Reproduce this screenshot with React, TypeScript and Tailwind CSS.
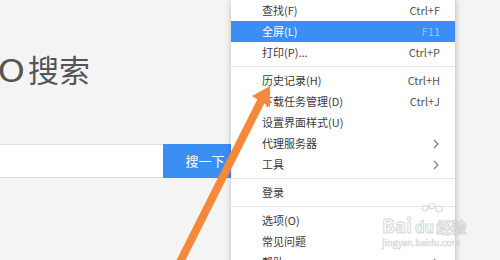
import React from "react";

type Item =
  | { type: "item"; label: string; shortcut?: string; sub?: boolean; active?: boolean }
  | { type: "sep" };

const items: Item[] = [
  { type: "item", label: "查找(F)", shortcut: "Ctrl+F" },
  { type: "item", label: "全屏(L)", shortcut: "F11", active: true },
  { type: "item", label: "打印(P)...", shortcut: "Ctrl+P" },
  { type: "sep" },
  { type: "item", label: "历史记录(H)", shortcut: "Ctrl+H" },
  { type: "item", label: "下载任务管理(D)", shortcut: "Ctrl+J" },
  { type: "item", label: "设置界面样式(U)" },
  { type: "item", label: "代理服务器", sub: true },
  { type: "item", label: "工具", sub: true },
  { type: "sep" },
  { type: "item", label: "登录" },
  { type: "sep" },
  { type: "item", label: "选项(O)" },
  { type: "item", label: "常见问题" },
  { type: "item", label: "帮助", sub: true },
];

function Chevron() {
  return (
    <svg width="6" height="10" viewBox="0 0 6 10" className="mr-[1px]">
      <path d="M1 1 L5 5 L1 9" fill="none" stroke="#777" strokeWidth="1.1" />
    </svg>
  );
}

export default function App() {
  return (
    <div className="relative w-[500px] h-[260px] overflow-hidden bg-[#f4f4f4] font-['Noto_Sans_CJK_SC','Noto_Sans',sans-serif]">
      {/* page content */}
      <div className="pt-[53px]">
        <div className="h-[32px] leading-[32px] text-[31px] text-[#555] whitespace-nowrap">
          <span className="ml-[2px] mr-[3px] inline-block scale-x-[1.2] origin-right">O</span>搜索
        </div>
        <div className="mt-[59px] flex">
          <div className="w-[163px] h-[34px] bg-white border-y border-[#dedede]" />
          <div className="w-[84px] h-[34px] bg-[#3a8ff2] text-white text-[13px] flex items-center justify-center">
            搜一下
          </div>
        </div>
      </div>

      {/* dropdown menu */}
      <div className="absolute left-[231px] top-0 w-[225px] h-[290px] bg-white border-r-[1px] border-[#d4d4d4] shadow-[0_0_6px_rgba(0,0,0,0.22)]">
        {items.map((it, i) =>
          it.type === "sep" ? (
            <div key={i} className="py-[3px]">
              <div className="h-px bg-[#e6e6e6]" />
            </div>
          ) : (
            <div
              key={i}
              className={
                "h-[21px] flex items-center justify-between pl-[31px] pr-[15px] text-[11px] " +
                (it.active ? "bg-[#3a8ef5] text-white" : "text-[#3a3a3a]")
              }
            >
              <span>{it.label}</span>
              {it.shortcut ? (
                <span className={it.active ? "text-[#9ec2f2]" : "text-[#555]"}>{it.shortcut}</span>
              ) : it.sub ? (
                <Chevron />
              ) : null}
            </div>
          )
        )}
      </div>

      {/* watermark */}
      <div className="absolute left-[382px] top-[203px] pointer-events-none opacity-70">
        <svg width="30" height="18" viewBox="0 0 30 18" className="absolute left-[34px] top-0">
          <circle cx="9" cy="5" r="3" fill="none" stroke="#ccc" strokeWidth="1.2" />
          <circle cx="16" cy="3" r="3" fill="none" stroke="#ccc" strokeWidth="1.2" />
          <circle cx="23" cy="6" r="3" fill="none" stroke="#ccc" strokeWidth="1.2" />
        </svg>
        <div className="pt-[12px] flex items-end leading-none whitespace-nowrap">
          <span className="text-[19px] font-bold text-white [-webkit-text-stroke:1px_#c8c8c8]">Bai</span>
          <span className="ml-[3px] text-[15px] font-bold text-white [-webkit-text-stroke:1px_#c8c8c8]">du</span>
          <span className="ml-[2px] text-[15px] font-bold text-white [-webkit-text-stroke:1px_#c8c8c8]">经验</span>
        </div>
        <div className="mt-[4px] text-[9px] leading-none text-white [-webkit-text-stroke:0.6px_#c8c8c8] whitespace-nowrap">
          jingyan.baidu.com
        </div>
      </div>

      {/* orange arrow annotation */}
      <svg className="absolute inset-0 pointer-events-none" width="500" height="260" viewBox="0 0 500 260">
        <line x1="176" y1="270" x2="262" y2="99" stroke="#f5893a" strokeWidth="8" />
        <polygon points="270,86 252,96 270,107" fill="#f5893a" />
      </svg>
    </div>
  );
}
